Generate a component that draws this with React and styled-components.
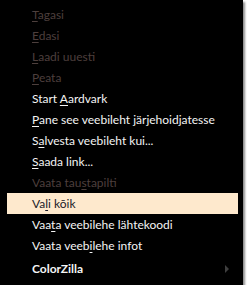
import styled, { createGlobalStyle } from "styled-components";

const Global = createGlobalStyle`
  body {
    margin: 0;
    background: #fff;
    font-family: Lato, "Liberation Sans", sans-serif;
  }
`;

const Menu = styled.ul`
  list-style: none;
  margin: 0;
  padding: 4px 0 6px;
  width: 243px;
  height: 285px;
  box-sizing: border-box;
  background: #000;
  box-shadow: 2px 2px 2px rgba(0, 0, 0, 0.45);
`;

const Item = styled.li`
  display: flex;
  align-items: center;
  justify-content: space-between;
  height: 21px;
  margin: 0 5px 0 7px;
  padding: 0 9px 0 25px;
  font-size: 12px;
  font-weight: ${(p) => (p.bold ? 700 : 400)};
  color: ${(p) => (p.disabled ? "#4d3f3d" : p.active ? "#1b1b29" : "#f4f4f4")};
  background: ${(p) => (p.active ? "#fee9cd" : "transparent")};
  white-space: nowrap;

  u {
    text-decoration: underline;
    text-underline-offset: 2px;
  }
`;

const Gap = styled.li`
  height: 2px;
`;

const Arrow = styled.span`
  width: 0;
  height: 0;
  border-top: 4px solid transparent;
  border-bottom: 4px solid transparent;
  border-left: 4px solid #3f3f3f;
`;

const items = [
  { pre: "", key: "T", post: "agasi", disabled: true },
  { pre: "", key: "E", post: "dasi", disabled: true },
  { pre: "", key: "L", post: "aadi uuesti", disabled: true },
  { pre: "", key: "P", post: "eata", disabled: true },
  { pre: "Start ", key: "A", post: "ardvark" },
  { pre: "", key: "P", post: "ane see veebileht järjehoidjatesse" },
  { pre: "S", key: "a", post: "lvesta veebileht kui..." },
  { pre: "", key: "S", post: "aada link..." },
  { pre: "Vaata tau", key: "s", post: "tapilti", disabled: true },
  { pre: "Va", key: "l", post: "i kõik", active: true },
  { pre: "Vaa", key: "t", post: "a veebilehe lähtekoodi" },
  { pre: "Vaata veeb", key: "i", post: "lehe infot" },
];

export default function App() {
  return (
    <>
      <Global />
      <Menu>
        {items.map((it, i) => (
          <Item key={i} disabled={it.disabled} active={it.active}>
            <span>
              {it.pre}
              <u>{it.key}</u>
              {it.post}
            </span>
          </Item>
        ))}
        <Gap />
        <Item bold>
          <span>ColorZilla</span>
          <Arrow />
        </Item>
      </Menu>
    </>
  );
}
